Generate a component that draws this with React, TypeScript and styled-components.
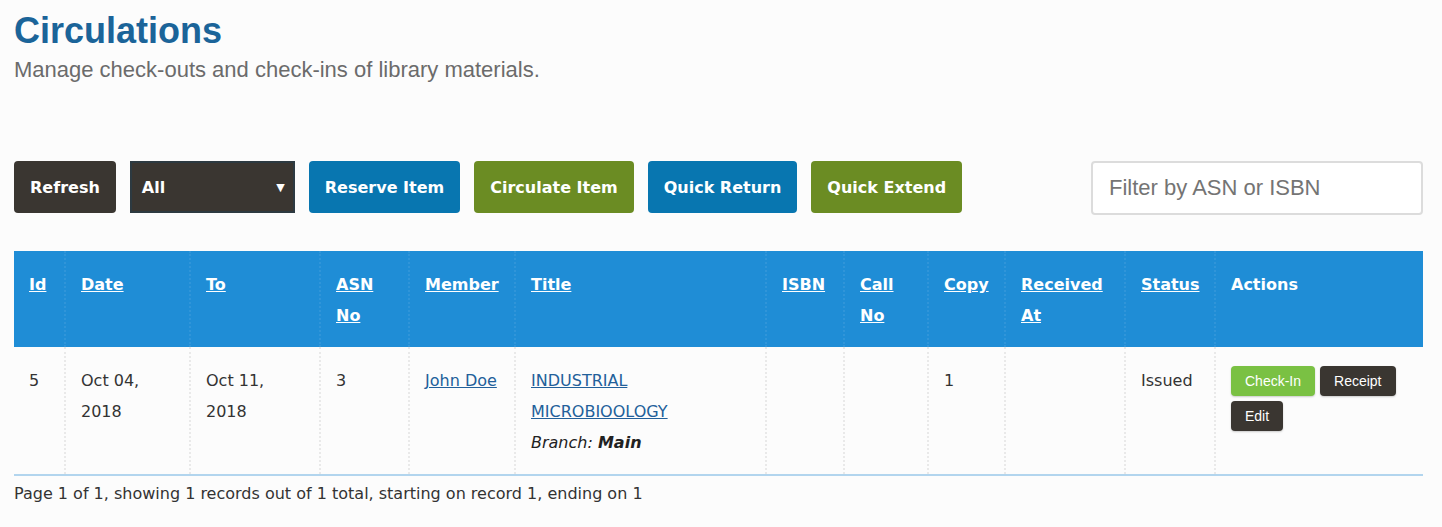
import React from "react";
import styled, { createGlobalStyle } from "styled-components";

const Global = createGlobalStyle`
  html, body { margin: 0; padding: 0; background: #fcfcfc; }
  body { font-family: "DejaVu Sans", Verdana, sans-serif; color: #333; }
`;

const Page = styled.div`
  padding: 10px 19px 0 14px;
`;

const Title = styled.h1`
  margin: 0;
  font-family: "Liberation Sans", Arial, sans-serif;
  font-size: 36px;
  font-weight: bold;
  color: #1b6499;
  line-height: 41px;
`;

const Subtitle = styled.p`
  margin: 6px 0 0;
  font-family: "Liberation Sans", Arial, sans-serif;
  font-size: 22px;
  line-height: 25px;
  color: #6b6b6b;
`;

const Toolbar = styled.div`
  margin-top: 79px;
  display: flex;
  align-items: flex-start;
  gap: 14px;
`;

type Tone = "dark" | "blue" | "olive";
const toneColor: Record<Tone, string> = {
  dark: "#3a3631",
  blue: "#0876b0",
  olive: "#6b8c23",
};

const ToolButton = styled.button<{ $tone: Tone }>`
  height: 52px;
  padding: 0 16px;
  border: none;
  border-radius: 4px;
  background: ${(p) => toneColor[p.$tone]};
  color: #fff;
  font-family: "DejaVu Sans", Verdana, sans-serif;
  font-weight: bold;
  font-size: 16px;
  cursor: pointer;
`;

const SelectBox = styled.div`
  width: 165px;
  height: 52px;
  box-sizing: border-box;
  border: 2px solid #2d3a41;
  background: #3a3631;
  color: #fff;
  display: flex;
  align-items: center;
  justify-content: space-between;
  padding: 0 8px 0 10px;
  font-weight: bold;
  font-size: 16px;
`;

const Arrow = styled.span`
  font-size: 11px;
`;

const FilterInput = styled.input`
  margin-left: auto;
  width: 332px;
  height: 54px;
  box-sizing: border-box;
  border: 2px solid #dcdcdc;
  border-radius: 4px;
  background: #fff;
  padding: 0 16px;
  font-family: "Liberation Sans", Arial, sans-serif;
  font-size: 22px;
  color: #333;
  outline: none;
  &::placeholder { color: #747474; }
`;

const Table = styled.table`
  margin-top: 36px;
  width: 100%;
  border-collapse: collapse;
  table-layout: fixed;
  font-size: 16px;
  line-height: 31px;
`;

const HeadCell = styled.th`
  background: #1f8dd6;
  color: #fff;
  text-align: left;
  vertical-align: top;
  font-weight: bold;
  padding: 18px 15px 16px;
  border-left: 2px dotted rgba(255, 255, 255, 0.08);
  &:first-child { border-left: none; }
`;

const HeadLink = styled.a`
  color: #fff;
  text-decoration: underline;
`;

const Cell = styled.td`
  vertical-align: top;
  padding: 18px 15px 16px;
  border-left: 2px dotted #e9e9e9;
  border-bottom: 2px solid #b2d5ee;
  &:first-child { border-left: none; }
`;

const DataLink = styled.a`
  color: #22609a;
  text-decoration: underline;
`;

const Branch = styled.div`
  font-style: italic;
  color: #222;
  b { font-weight: bold; }
`;

const Actions = styled.div`
  display: flex;
  flex-wrap: wrap;
  gap: 5px;
  padding-top: 1px;
`;

const SmallButton = styled.button<{ $tone: "green" | "dark" }>`
  height: 30px;
  padding: 0 14px;
  border: none;
  border-radius: 4px;
  background: ${(p) => (p.$tone === "green" ? "#7ac143" : "#3a3631")};
  color: #fff;
  font-family: "Liberation Sans", Arial, sans-serif;
  font-size: 14px;
  box-shadow: 0 1px 2px rgba(0, 0, 0, 0.2);
  cursor: pointer;
`;

const Footer = styled.div`
  margin-top: 8px;
  font-size: 16px;
  line-height: 20px;
  color: #333;
`;

const columns: { label: string; width: number; link: boolean }[] = [
  { label: "Id", width: 51, link: true },
  { label: "Date", width: 125, link: true },
  { label: "To", width: 130, link: true },
  { label: "ASN No", width: 89, link: true },
  { label: "Member", width: 106, link: true },
  { label: "Title", width: 251, link: true },
  { label: "ISBN", width: 78, link: true },
  { label: "Call No", width: 84, link: true },
  { label: "Copy", width: 77, link: true },
  { label: "Received At", width: 120, link: true },
  { label: "Status", width: 90, link: true },
  { label: "Actions", width: 208, link: false },
];

export default function App() {
  return (
    <Page>
      <Global />
      <Title>Circulations</Title>
      <Subtitle>Manage check-outs and check-ins of library materials.</Subtitle>
      <Toolbar>
        <ToolButton $tone="dark">Refresh</ToolButton>
        <SelectBox>
          <span>All</span>
          <Arrow>▼</Arrow>
        </SelectBox>
        <ToolButton $tone="blue">Reserve Item</ToolButton>
        <ToolButton $tone="olive">Circulate Item</ToolButton>
        <ToolButton $tone="blue">Quick Return</ToolButton>
        <ToolButton $tone="olive">Quick Extend</ToolButton>
        <FilterInput placeholder="Filter by ASN or ISBN" />
      </Toolbar>
      <Table>
        <colgroup>
          {columns.map((c) => (
            <col key={c.label} style={{ width: c.width }} />
          ))}
        </colgroup>
        <thead>
          <tr>
            {columns.map((c) => (
              <HeadCell key={c.label}>
                {c.link ? <HeadLink href="#">{c.label}</HeadLink> : c.label}
              </HeadCell>
            ))}
          </tr>
        </thead>
        <tbody>
          <tr>
            <Cell>5</Cell>
            <Cell>Oct 04, 2018</Cell>
            <Cell>Oct 11, 2018</Cell>
            <Cell>3</Cell>
            <Cell>
              <DataLink href="#">John Doe</DataLink>
            </Cell>
            <Cell>
              <DataLink href="#">INDUSTRIAL MICROBIOOLOGY</DataLink>
              <Branch>
                Branch: <b>Main</b>
              </Branch>
            </Cell>
            <Cell></Cell>
            <Cell></Cell>
            <Cell>1</Cell>
            <Cell></Cell>
            <Cell>Issued</Cell>
            <Cell>
              <Actions>
                <SmallButton $tone="green">Check-In</SmallButton>
                <SmallButton $tone="dark">Receipt</SmallButton>
                <SmallButton $tone="dark">Edit</SmallButton>
              </Actions>
            </Cell>
          </tr>
        </tbody>
      </Table>
      <Footer>
        Page 1 of 1, showing 1 records out of 1 total, starting on record 1, ending on 1
      </Footer>
    </Page>
  );
}
